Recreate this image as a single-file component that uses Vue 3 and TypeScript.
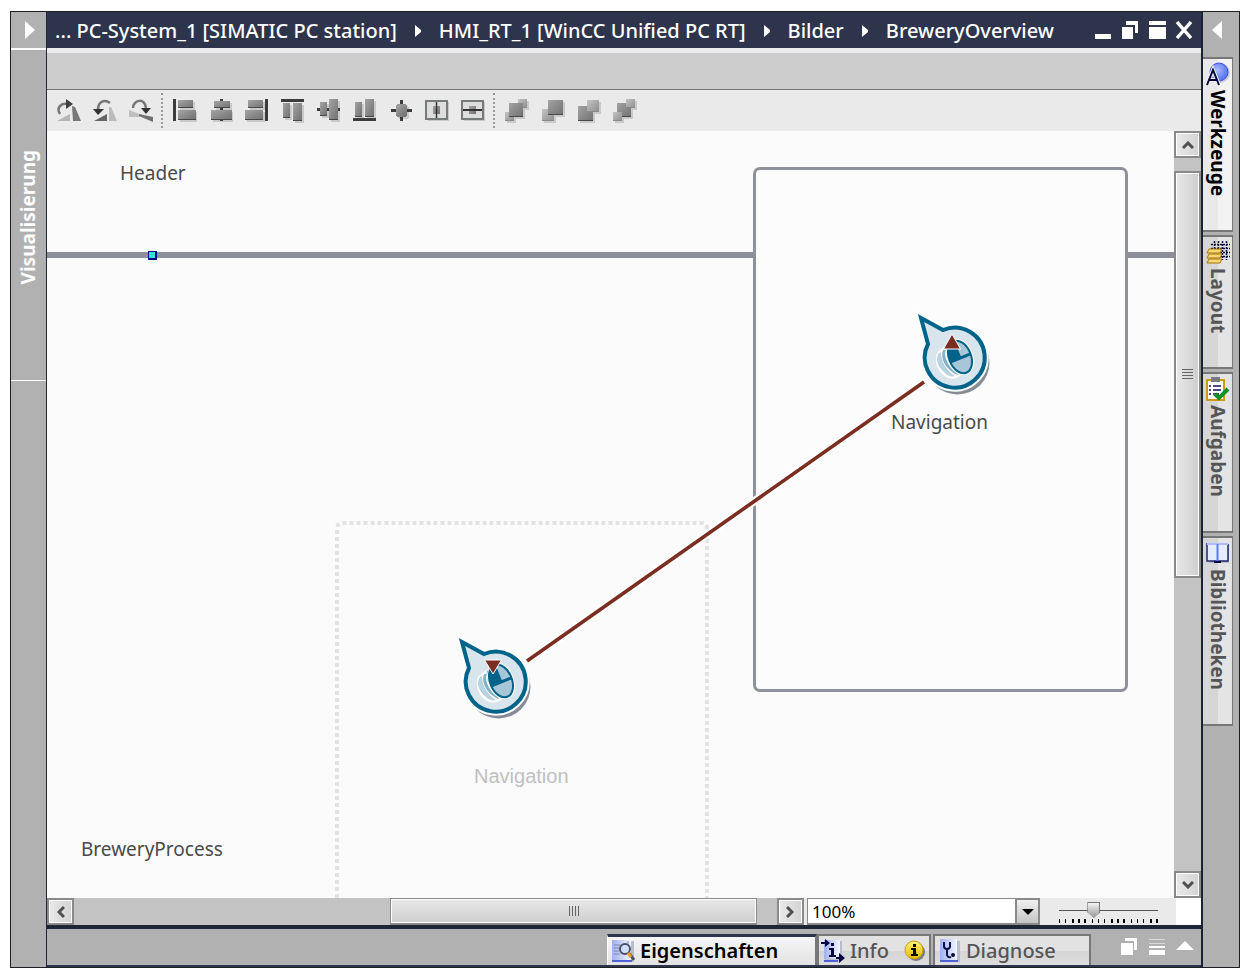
<script setup lang="ts">
import { ref } from 'vue'

interface Box { x: number; y: number; w: number; h: number; tone?: 'soft' | 'dark' }
interface Tool { label: string; bars?: number[][]; boxes?: Box[]; kind?: string }

const rotateTools: Tool[] = [
  { label: 'Rechts drehen', kind: 'right' },
  { label: 'Links drehen', kind: 'left' },
  { label: 'Spiegeln', kind: 'flip' },
]

const alignTools: Tool[] = [
  { label: 'Links ausrichten', bars: [[0, 0, 3, 22]], boxes: [{ x: 5, y: 1, w: 15, h: 8 }, { x: 5, y: 11, w: 18, h: 10 }] },
  { label: 'Horizontal zentrieren', bars: [[11, 0, 3, 22]], boxes: [{ x: 5, y: 2, w: 16, h: 7 }, { x: 2, y: 11, w: 21, h: 10 }] },
  { label: 'Rechts ausrichten', bars: [[20, 0, 3, 22]], boxes: [{ x: 3, y: 1, w: 15, h: 8 }, { x: 0, y: 11, w: 18, h: 10 }] },
  { label: 'Oben ausrichten', bars: [[0, 0, 23, 3]], boxes: [{ x: 2, y: 4, w: 7, h: 15 }, { x: 12, y: 4, w: 9, h: 18 }] },
  { label: 'Vertikal zentrieren', bars: [[0, 9, 23, 3]], boxes: [{ x: 3, y: 3, w: 7, h: 14 }, { x: 12, y: 0, w: 9, h: 21 }] },
  { label: 'Unten ausrichten', bars: [[0, 19, 23, 3]], boxes: [{ x: 2, y: 3, w: 7, h: 15 }, { x: 12, y: 0, w: 9, h: 18 }] },
  { label: 'Zentrieren', bars: [[2, 10, 21, 3], [11, 1, 3, 21]], boxes: [{ x: 8, y: 5, w: 9, h: 13 }, { x: 7, y: 6, w: 11, h: 11 }] },
  { label: 'Gleiche Breite', kind: 'splitV' },
  { label: 'Gleiche Höhe', kind: 'splitH' },
]

const orderTools: Tool[] = [
  { label: 'In den Vordergrund', boxes: [{ x: 13, y: 0, w: 9, h: 9, tone: 'soft' }, { x: 0, y: 13, w: 9, h: 9, tone: 'soft' }, { x: 4, y: 4, w: 14, h: 14 }] },
  { label: 'Eine Ebene nach vorn', boxes: [{ x: 1, y: 10, w: 12, h: 12, tone: 'soft' }, { x: 7, y: 1, w: 15, h: 15 }] },
  { label: 'Eine Ebene nach hinten', boxes: [{ x: 1, y: 7, w: 15, h: 15 }, { x: 10, y: 1, w: 12, h: 12, tone: 'soft' }] },
  { label: 'In den Hintergrund', boxes: [{ x: 4, y: 4, w: 14, h: 14 }, { x: 13, y: 0, w: 9, h: 9, tone: 'soft' }, { x: 0, y: 13, w: 9, h: 9, tone: 'soft' }] },
]

const toolGroups = [rotateTools, alignTools, orderTools]
const crumbs = ['... PC-System_1 [SIMATIC PC station]', 'HMI_RT_1 [WinCC Unified PC RT]', 'Bilder', 'BreweryOverview']
const cards = ['Werkzeuge', 'Layout', 'Aufgaben', 'Bibliotheken']
const activeCard = ref('Werkzeuge')
const activeTab = ref('Eigenschaften')
const zoomLevel = ref('100%')
const zoomSlider = ref(33)
const ticks = [0, 6, 13, 14, 19, 20, 25, 26, 33, 39, 45, 52, 53, 58, 59, 64, 65, 72, 78, 84, 91, 92, 97, 98]

function fillFor(tone?: string): string {
  return tone === 'soft' ? 'url(#softGrey)' : 'url(#midGrey)'
}
</script>

<template>
  <div class="page">
    <svg class="defs" width="0" height="0" aria-hidden="true">
      <defs>
        <linearGradient id="midGrey" x1="0" y1="0" x2="1" y2="1">
          <stop offset="0" stop-color="#a4a4a4" /><stop offset="1" stop-color="#707070" />
        </linearGradient>
        <linearGradient id="softGrey" x1="0" y1="0" x2="1" y2="1">
          <stop offset="0" stop-color="#c4c4c4" /><stop offset="1" stop-color="#8e8e8e" />
        </linearGradient>
        <radialGradient id="ball" cx="0.4" cy="0.4" r="0.7">
          <stop offset="0" stop-color="#a9bdff" /><stop offset="1" stop-color="#4a66ee" />
        </radialGradient>
        <linearGradient id="gold" x1="0" y1="0" x2="0" y2="1">
          <stop offset="0" stop-color="#fff27a" /><stop offset="1" stop-color="#e8b800" />
        </linearGradient>
        <linearGradient id="sheet" x1="0" y1="0" x2="1" y2="0">
          <stop offset="0" stop-color="#9fb0ee" /><stop offset="1" stop-color="#f4f6ff" />
        </linearGradient>
        <g id="pin">
          <circle cx="42.5" cy="51.5" r="32" fill="#868b94" />
          <path d="M6 7 L28 19 A30 30 0 1 1 13 33 Z" fill="#fff" stroke="#fff" stroke-width="8" />
          <path d="M6 7 L28 19 A30 30 0 1 1 13 33 Z" fill="#d9e5ec" stroke="#00638a" stroke-width="4" />
          <path d="M25 39 C18 45 20 59 31 66 C36 69 42 67 43 66 L49 62 L30 35 Z" fill="#fff" />
          <path d="M24 42 C20 47 22 56 30 62 C33 65 37 66 40 65 C32 60 26 51 26 41 Z" fill="#b9d2df" />
          <path d="M28 39 C25 47 30 57 40 63 L44 64 C34 57 29 48 30 39 Z" fill="#82b0c7" />
          <path d="M31 36 C29 46 36 57 46 64 C38 55 33 47 33 36 Z" fill="#2d7fa2" />
          <g transform="rotate(-22 45 46)">
            <ellipse cx="45" cy="46" rx="13" ry="19" fill="#fff" />
            <ellipse cx="45" cy="46" rx="11" ry="17" fill="#a7c7d9" stroke="#00638a" stroke-width="2" />
            <path d="M45 29 C38 30 34 37 34 48 L45 48 Z" fill="#00638a" />
            <path d="M34 47 H56" stroke="#00638a" stroke-width="3" />
            <path d="M45 29 V47" stroke="#00638a" stroke-width="2" />
          </g>
        </g>
      </defs>
    </svg>

    <div class="window">
      <aside class="rail rail-left">
        <button class="rail-toggle" type="button" aria-label="Projektnavigation aufklappen">
          <svg width="10" height="18" viewBox="0 0 10 18"><path d="M0 0 L10 9 L0 18 Z" fill="#fff" /></svg>
        </button>
        <button class="rail-section" type="button"><span>Visualisierung</span></button>
      </aside>

      <main class="main">
        <header class="titlebar">
          <nav class="crumbs" aria-label="Pfad">
            <template v-for="(c, i) in crumbs" :key="c">
              <svg v-if="i > 0" class="crumb-arrow" width="6" height="12" viewBox="0 0 6 12"><path d="M0 0 L6 5 V7 L0 12 Z" fill="#fff" /></svg>
              <a href="#">{{ c }}</a>
            </template>
          </nav>
          <div class="window-buttons">
            <button type="button" aria-label="Minimieren"><svg width="18" height="18"><path d="M1 13 H17 V18 H1 Z" fill="#fff" /></svg></button>
            <button type="button" aria-label="Wiederherstellen"><svg width="18" height="18"><path d="M5 0 H17 V12 H14 V4 H5 Z M1 6 H12 V18 H1 Z" fill="#fff" /></svg></button>
            <button type="button" aria-label="Maximieren"><svg width="18" height="18"><path d="M1 0 H18 V4 H1 Z M1 6 H18 V18 H1 Z" fill="#fff" /></svg></button>
            <button type="button" aria-label="Schließen"><svg width="18" height="18"><path d="M2 1 L16 17 M16 1 L2 17" stroke="#fff" stroke-width="3.4" /></svg></button>
          </div>
        </header>
        <div class="subbar"></div>

        <div class="toolbar" role="toolbar" aria-label="Ausrichten">
          <div v-for="(group, gi) in toolGroups" :key="gi" class="tool-group">
            <button v-for="t in group" :key="t.label" class="tool" type="button" :aria-label="t.label">
              <svg width="24" height="24" viewBox="0 0 24 24">
                <template v-if="t.kind === 'right'">
                  <path d="M3 15 C-1 9 4 4 10 5" fill="none" stroke="#777" stroke-width="2.5" />
                  <path d="M9 0 L16 5 L9 10 Z" fill="#404040" />
                  <path d="M0 22 L13 15 V22 Z" fill="#b5b5b5" /><path d="M15 7 L18 8 L24 22 H16 Z" fill="#777" />
                </template>
                <template v-else-if="t.kind === 'left'">
                  <path d="M5 11 C5 2 12 0 17 4" fill="none" stroke="#777" stroke-width="2.5" />
                  <path d="M0 10 H11 L5 16 Z" fill="#333" />
                  <path d="M1 22 L14 15 V22 Z" fill="#666" /><path d="M16 8 L18 8 L24 22 H16 Z" fill="#bbb" />
                </template>
                <template v-else-if="t.kind === 'flip'">
                  <path d="M4 9 C4 1 16 -2 17 9" fill="none" stroke="#777" stroke-width="2.5" />
                  <path d="M12 9 H22 L17 15 Z" fill="#333" />
                  <path d="M0 11 L13 16 V18 H0 Z" fill="#c0c0c0" /><path d="M10 15 L24 18 V23 L10 17 Z" fill="#707070" />
                </template>
                <template v-else-if="t.kind">
                  <rect x="3" y="3" width="21" height="19" fill="#c8c8c8" />
                  <rect x="1" y="2" width="21" height="18" fill="#ddd" stroke="#777b77" stroke-width="2" />
                  <rect x="8" y="7" width="7" height="8" fill="url(#midGrey)" />
                  <path v-if="t.kind === 'splitV'" d="M11.5 3 V19" stroke="#333" stroke-width="1.5" />
                  <path v-else d="M2 11 H21" stroke="#333" stroke-width="2" />
                </template>
                <template v-else>
                  <rect v-for="(b, i) in t.boxes" :key="'s' + i" :x="b.x + 2" :y="b.y + 2" :width="b.w" :height="b.h" fill="#c9c9c9" />
                  <rect v-for="(b, i) in t.bars" :key="'b' + i" :x="b[0]" :y="b[1]" :width="b[2]" :height="b[3]" fill="#3c3c3c" />
                  <g v-for="(b, i) in t.boxes" :key="'f' + i">
                    <rect :x="b.x" :y="b.y" :width="b.w" :height="b.h" :fill="fillFor(b.tone)" />
                    <rect v-if="t.label !== 'Zentrieren'" :x="b.x" :y="b.y + b.h - 1" :width="b.w" height="1" :fill="b.tone ? '#8a8a8a' : '#484848'" />
                  </g>
                </template>
              </svg>
            </button>
          </div>
        </div>

        <div class="workspace">
          <section class="canvas" aria-label="Bildbereich">
            <div class="divider"></div>
            <div class="handle"></div>
            <div class="popup"></div>
            <svg class="drawing" width="1127" height="767" viewBox="0 0 1127 767" aria-hidden="true">
              <path d="M290 767 V398 Q290 392 296 392 H654 Q660 392 660 398 V767" fill="none" stroke="#e2e2e2" stroke-width="4" stroke-dasharray="4 3" />
              <path d="M480 530 L877 251" stroke="#fff" stroke-width="8" />
              <path d="M480 530 L877 251" stroke="#7b2d21" stroke-width="3.6" />
              <use href="#pin" x="868" y="180" />
              <path d="M905 203 L913.500 218 H896.500 Z" fill="#7b2d21" stroke="#fff" stroke-width="1" />
              <use href="#pin" x="409" y="504" />
              <path d="M446 543 L454.500 529 H437.500 Z" fill="#7b2d21" stroke="#fff" stroke-width="1" />
            </svg>
            <span class="label label-header">Header</span>
            <span class="label label-nav">Navigation</span>
            <span class="label label-ghost">Navigation</span>
            <span class="label label-process">BreweryProcess</span>
          </section>
          <div class="vscroll">
            <button type="button" class="sbtn" aria-label="Nach oben"><svg width="12" height="8"><path d="M1 7 L6 2 L11 7" /></svg></button>
            <div class="vgap-top"></div>
            <div class="vthumb"><i></i><i></i><i></i><i></i></div>
            <div class="vgap-bottom"></div>
            <button type="button" class="sbtn" aria-label="Nach unten"><svg width="12" height="8"><path d="M1 1 L6 6 L11 1" /></svg></button>
          </div>
        </div>

        <div class="footer-row">
          <div class="hscroll">
            <button type="button" class="sbtn" aria-label="Nach links"><svg width="8" height="12"><path d="M7 1 L2 6 L7 11" /></svg></button>
            <div class="hgap-left"></div>
            <div class="hthumb"><i></i><i></i><i></i><i></i></div>
            <div class="hgap-right"></div>
            <button type="button" class="sbtn" aria-label="Nach rechts"><svg width="8" height="12"><path d="M1 1 L6 6 L1 11" /></svg></button>
          </div>
          <div class="zoom-select">
            <select v-model="zoomLevel" aria-label="Zoom">
              <option>50%</option><option>100%</option><option>200%</option>
            </select>
            <span class="drop"><svg width="12" height="6"><path d="M0 0 H12 L6 6 Z" fill="#000" /></svg></span>
          </div>
          <div class="zoom-slider">
            <input v-model="zoomSlider" type="range" min="0" max="100" aria-label="Zoomfaktor" />
            <svg width="100" height="4"><rect v-for="t in ticks" :key="t" :x="t" y="0" width="1" height="4" /></svg>
          </div>
          <div class="corner"></div>
        </div>

        <footer class="inspector">
          <button type="button" class="tab" :class="{ active: activeTab === 'Eigenschaften' }" @click="activeTab = 'Eigenschaften'">
            <svg width="24" height="24" viewBox="0 0 24 24">
              <rect x="2" y="2" width="21" height="21" fill="#b9bdcc" />
              <rect x="1" y="1" width="19" height="20" fill="url(#sheet)" /><path d="M1 22 H21" stroke="#4d62d8" stroke-width="2" />
              <path d="M3 6 H9 M3 9 H8 M3 12 H8 M3 15 H9 M17 2 V7" stroke="#8088ab" stroke-width="1" />
              <circle cx="14" cy="10" r="5" fill="#cfe0ff" stroke="#4c4f66" stroke-width="2" />
              <path d="M18 14 L23 21" stroke="#4c4f66" stroke-width="3" /><path d="M17 14 L20 18" stroke="#f0a020" stroke-width="3" />
            </svg>
            <span>Eigenschaften</span>
          </button>
          <button type="button" class="tab info" :class="{ active: activeTab === 'Info' }" @click="activeTab = 'Info'">
            <svg width="24" height="24" viewBox="0 0 24 24">
              <rect x="4" y="2" width="17" height="20" fill="#b9bdcc" /><rect x="3" y="1" width="16" height="19" fill="url(#sheet)" />
              <path d="M3 22 H17" stroke="#4d62d8" stroke-width="2" />
              <path d="M10 4 H13 V7 H10 Z M8 9 H13 V16 H15 V18 H8 V16 H10 V11 H8 Z" fill="#04043e" />
              <path d="M0 3 H4 V0 L9 4 L4 8 V5 H0 Z M15 18 H18 V14 L24 19 L18 24 V20 H15 Z" fill="#04043e" />
            </svg>
            <span>Info</span>
            <svg class="badge" width="22" height="22" viewBox="0 0 22 22">
              <circle cx="12" cy="12" r="9" fill="#777a88" /><circle cx="10" cy="10" r="9" fill="url(#gold)" stroke="#c9a000" />
              <path d="M9 4 H12 V7 H9 Z M7 8 H12 V14 H14 V16 H7 V14 H9 V10 H7 Z" fill="#000" />
            </svg>
          </button>
          <button type="button" class="tab diag" :class="{ active: activeTab === 'Diagnose' }" @click="activeTab = 'Diagnose'">
            <svg width="20" height="24" viewBox="0 0 20 24">
              <rect x="3" y="2" width="17" height="21" fill="#b9bdcc" /><rect x="0" y="0" width="17" height="22" fill="url(#sheet)" />
              <path d="M0 22 H18" stroke="#4d62d8" stroke-width="2" />
              <path d="M4 3 V7 Q4 10 7 10 Q10 10 10 7 V3 M7 10 V15 Q7 19 11 18" fill="none" stroke="#0c0f48" stroke-width="2" />
              <circle cx="13" cy="16" r="2" fill="#0a0a3c" />
            </svg>
            <span>Diagnose</span>
          </button>
          <div class="inspector-buttons">
            <button type="button" aria-label="Abdocken"><svg width="18" height="18"><path d="M5 0 H17 V12 H14 V3 H5 Z M1 5 H13 V17 H1 Z" fill="#fff" /></svg></button>
            <button type="button" aria-label="Teilen"><svg width="18" height="18"><path d="M1 1.500 H17 M1 5.500 H17" stroke="#dadada" stroke-width="1" /><path d="M1 8 H17 V10 H1 Z M1 12 H17 V17 H1 Z" fill="#fff" /></svg></button>
            <button type="button" aria-label="Aufklappen"><svg width="18" height="18"><path d="M0 12 L9 3 L18 12 Z" fill="#fff" /></svg></button>
          </div>
        </footer>
      </main>

      <aside class="rail rail-right">
        <button class="cards-toggle" type="button" aria-label="Task Cards einklappen">
          <svg width="10" height="18" viewBox="0 0 10 18"><path d="M10 0 L0 9 L10 18 Z" fill="#fff" /></svg>
        </button>
        <button v-for="c in cards" :key="c" type="button" class="card" :class="{ active: activeCard === c }" @click="activeCard = c">
          <svg width="24" height="24" viewBox="0 0 24 24">
            <template v-if="c === 'Werkzeuge'">
              <circle cx="14" cy="11" r="10" fill="#c9c9d8" /><circle cx="13" cy="10" r="9" fill="url(#ball)" stroke="#3c55dd" />
              <path d="M1 23 L7 8 L13 23 M3 18 H11" fill="none" stroke="#f0f0ff" stroke-width="4" />
              <path d="M1 23 L7 8 L13 23 M3 18 H11" fill="none" stroke="#05053a" stroke-width="2" />
            </template>
            <template v-else-if="c === 'Layout'">
              <path d="M5 4.500 H24 M5 8.500 H24 M14 12.500 H24 M14 16.500 H24 M8.500 1 V9 M12.500 1 V9 M16.500 1 V20 M20.500 1 V20" stroke="#11113f" stroke-width="1.500" stroke-dasharray="2 1" />
              <path d="M3 9 H16 L14 13 H1 Z M3 14 H16 L14 18 H1 Z M3 19 H16 L14 23 H1 Z" fill="#f7d77a" stroke="#a97500" stroke-width="1" />
            </template>
            <template v-else-if="c === 'Aufgaben'">
              <path d="M1 3 H18 V23 H1 Z" fill="#fff" stroke="#d09a10" stroke-width="2" />
              <rect x="5" y="0" width="9" height="5" fill="#777a84" />
              <path d="M3 9 H5 M7 9 H15 M3 13 H5 M7 13 H15 M3 17 H5 M7 17 H13" stroke="#101050" stroke-width="1.500" />
              <path d="M9 17 L13 21 L22 12" fill="none" stroke="#149025" stroke-width="4" />
            </template>
            <template v-else>
              <path d="M3 4 H23 V22 H3 Z" fill="#b7b9c8" />
              <path d="M1 3 H10 L11.500 4 L13 3 H22 V20 H1 Z" fill="#e6ecff" />
              <path d="M1 2 V20 H22 V3" fill="none" stroke="#1c2472" stroke-width="1.500" /><path d="M1 3 H22" stroke="#aebcff" stroke-width="2" />
              <path d="M11.500 3 V20" stroke="#5b78ff" stroke-width="2" /><path d="M8 20 H15 V22 H8 Z" fill="#06063c" />
            </template>
          </svg>
          <span>{{ c }}</span>
        </button>
      </aside>
    </div>
  </div>
</template>

<style>
body { margin: 0; background: #fff; }
</style>

<style scoped>
* { box-sizing: border-box; }
.page {
  min-height: 100vh;
  padding: 11px 13px 10px 10px;
  display: flex;
  font-family: "Noto Sans", "Open Sans", sans-serif;
  font-size: 20px;
  color: #555;
}
.defs { position: absolute; }
button { font: inherit; color: inherit; background: none; border: 0; padding: 0; margin: 0; cursor: pointer; }
svg { display: block; flex: none; }
.window { flex: 1; min-width: 0; display: flex; border: 1px solid #1c2024; background: #b1b1b1; }

.rail { display: flex; flex-direction: column; flex: none; background: #b1b1b1; }
.rail-left { width: 36px; border-right: 1px solid #1f2740; }
.rail-toggle { height: 36px; display: flex; align-items: center; padding-left: 14px; }
.rail-section { height: 333px; border-top: 2px solid #fff; border-bottom: 1px solid #fff; display: flex; align-items: center; justify-content: center; padding: 4px 2px 0 0; }
.rail-section span { writing-mode: vertical-rl; transform: rotate(180deg); color: #fff; font-size: 19px; font-weight: 700; line-height: 24px; }

.main { flex: 1; min-width: 0; display: flex; flex-direction: column; }
.titlebar { height: 36px; flex: none; background: #2d344c; display: flex; align-items: center; justify-content: space-between; padding: 0 8px; }
.crumbs { display: flex; align-items: center; gap: 18px; padding-top: 1px; white-space: nowrap; }
.crumbs a { color: #fff; text-decoration: none; font-weight: 500; line-height: 28px; }
.window-buttons { display: flex; gap: 9px; }
.subbar { height: 42px; flex: none; background: #ccc; border-top: 5px solid #ebebed; border-bottom: 1px solid #777; }

.toolbar { height: 41px; flex: none; background: #eaeaea; display: flex; align-items: center; padding-left: 4px; }
.tool-group { display: flex; }
.tool-group + .tool-group { border-left: 2px dotted #999; margin-left: 2px; padding-left: 4px; }
.tool { width: 36px; height: 35px; display: flex; align-items: center; justify-content: center; }

.workspace { flex: 1; min-height: 0; display: flex; }
.canvas { flex: 1; min-width: 0; position: relative; overflow: hidden; background: #fbfbfb; }
.divider { position: absolute; left: 0; right: 0; top: 121px; height: 6px; background: #8c8f98; }
.handle { position: absolute; left: 101px; top: 120px; width: 9px; height: 9px; background: #2ee0e4; border: 1px solid #00007e; border-right-width: 2px; border-bottom-width: 2px; }
.popup { position: absolute; left: 706px; top: 36px; width: 375px; height: 525px; border: 3px solid #8e9199; border-radius: 7px; background: #fcfcfc; }
.drawing { position: absolute; left: 0; top: 0; }
.label { position: absolute; font-size: 19px; line-height: 26px; color: #4a4a4a; white-space: nowrap; }
.label-header { left: 73px; top: 29px; }
.label-nav { left: 844px; top: 278px; }
.label-ghost { left: 427px; top: 632px; font-family: "Liberation Sans", Arial, sans-serif; font-size: 20px; color: #bfc0c1; }
.label-process { left: 34px; top: 705px; }

.sbtn { flex: none; display: flex; align-items: center; justify-content: center; background: linear-gradient(90deg, #e9e9e9, #d3d3d3); border: 2px solid #8a8a8a; box-shadow: inset 0 0 0 1px #fff; }
.sbtn path { fill: none; stroke: #505050; stroke-width: 3; }
.vscroll { width: 27px; flex: none; display: flex; flex-direction: column; background: #c3c3c3; }
.vscroll .sbtn { height: 27px; }
.vgap-top { flex: 13; }
.vthumb { flex: 406; display: flex; flex-direction: column; align-items: center; justify-content: center; gap: 2px; border: 2px solid #8a8a8a; box-shadow: inset 0 0 0 1px #fff; background: linear-gradient(90deg, #e8e8e8, #cecece); }
.vthumb i { width: 11px; height: 1px; background: #666; }
.vgap-bottom { flex: 295; }

.footer-row { height: 27px; flex: none; display: flex; background: #eaeaea; }
.hscroll { flex: 1; min-width: 0; display: flex; background: #c3c3c3; }
.hscroll .sbtn { width: 27px; }
.hgap-left { flex: 317; }
.hthumb { flex: 366; display: flex; align-items: center; justify-content: center; gap: 2px; border: 1px solid #8a8a8a; border-bottom-width: 2px; box-shadow: inset 0 0 0 1px #fff; background: linear-gradient(#e8e8e8, #cecece); }
.hthumb i { width: 1px; height: 10px; background: #666; }
.hgap-right { flex: 20; }
.zoom-select { position: relative; width: 236px; flex: none; padding-left: 3px; }
.zoom-select select { width: 100%; height: 27px; appearance: none; border: 1px solid #8a8a8a; border-bottom-width: 2px; border-radius: 0; background: #fff; padding: 0 28px 0 4px; margin: 0; font-family: inherit; font-size: 17px; color: #000; display: block; }
.drop { position: absolute; right: 0; top: 0; width: 25px; height: 27px; display: flex; align-items: center; justify-content: center; pointer-events: none; border: 2px solid #8a8a8a; background: linear-gradient(#f0f0f0, #c4c4c4); }
.zoom-slider { width: 136px; flex: none; padding: 3px 18px 0 19px; }
.zoom-slider input { appearance: none; display: block; width: 100%; height: 18px; margin: 0; background: linear-gradient(#555, #555) center / 100% 1px no-repeat; }
.zoom-slider input::-webkit-slider-thumb { appearance: none; width: 13px; height: 16px; background: linear-gradient(#f4f4f4, #999); border: 1px solid #777; clip-path: polygon(0 0, 100% 0, 100% 65%, 50% 100%, 0 65%); }
.zoom-slider svg { width: 100%; }
.corner { width: 25px; flex: none; background: #fff; }

.inspector { height: 42px; flex: none; border-top: 4px solid #1f2438; border-bottom: 2px solid #2d344c; display: flex; justify-content: flex-end; align-items: flex-end; }
.tab { display: flex; align-items: center; height: 31px; gap: 5px; padding: 0 3px; border: 2px solid #777; border-bottom: 0; background: linear-gradient(#e2e2e2 50%, #d4d4d4 50%, #dedede); font-weight: 500; line-height: 28px; width: 114px; white-space: nowrap; }
.tab.active { width: 210px; color: #000; font-weight: 600; border-top: 3px solid #2d344c; border-left: 1px solid #fff; background: linear-gradient(#f6f6f8, #e2e2e2); }
.tab.info { gap: 5px; padding-left: 2px; }
.badge { margin-left: auto; }
.tab.diag { width: 158px; margin-left: 2px; padding-left: 5px; gap: 6px; }
.inspector-buttons { display: flex; gap: 10px; padding: 0 7px 9px 29px; }

.rail-right { width: 38px; border-left: 2px solid #1c2136; padding-right: 6px; }
.cards-toggle { height: 45px; padding: 0 0 9px 9px; display: flex; align-items: center; }
.card { writing-mode: vertical-rl; display: flex; align-items: center; gap: 4px; padding: 3px 0 34px; margin-bottom: 3px; border: 1px solid #777; border-width: 2px 1px 2px 0; background: linear-gradient(90deg, #d6d6d6 50%, #e4e4e4 50%); font-size: 19px; font-weight: 700; line-height: 28px; }
.card.active { color: #000; background: linear-gradient(90deg, #e9e9e9 50%, #f3f3f3 50%); }
</style>
